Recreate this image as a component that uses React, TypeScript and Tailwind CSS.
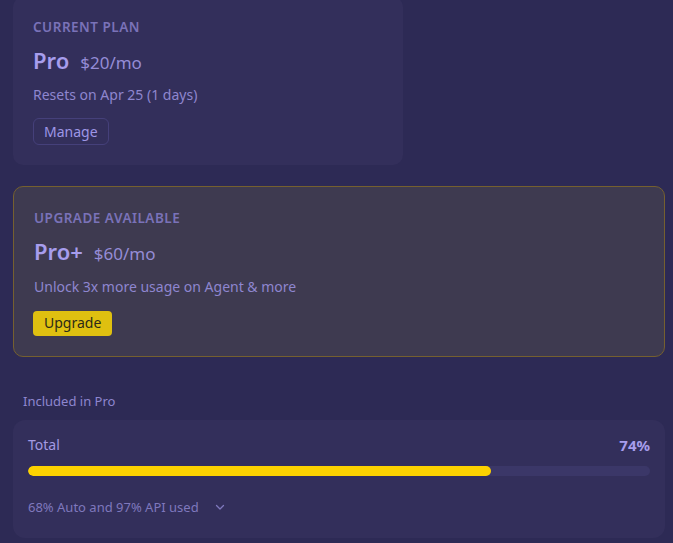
import React from "react";

export default function App() {
  return (
    <div
      className="w-[673px] h-[543px] overflow-hidden bg-[#2d2a55] text-[#9b93dc]"
      style={{ fontFamily: '"Noto Sans", "Open Sans", sans-serif' }}
    >
      <div className="pl-[13px] pr-[8px] mt-[-3px] flex flex-col">
        {/* Current plan */}
        <div className="w-[390px] rounded-[10px] bg-[#332f5b] pl-[20px] pt-[20px] pb-[20px]">
          <div className="text-[13.5px] leading-[20px] font-semibold tracking-[0.5px] text-[#7a72b8]">
            CURRENT PLAN
          </div>
          <div className="mt-[10px] flex items-baseline gap-[11px]">
            <span className="text-[22px] leading-[26px] font-semibold text-[#a79ded]">Pro</span>
            <span className="text-[17px] leading-[26px] text-[#958cd6]">$20/mo</span>
          </div>
          <div className="mt-[9px] text-[14px] leading-[20px] text-[#8e86cf]">
            Resets on Apr 25 (1 days)
          </div>
          <div className="mt-[13px]">
            <button className="h-[27px] px-[10px] rounded-[6px] border border-[#45407a] text-[14px] leading-[20px] text-[#9e96e6]">
              Manage
            </button>
          </div>
        </div>

        {/* Upgrade */}
        <div className="mt-[21px] rounded-[10px] border border-[#75602f] bg-[#3e3a50] pl-[19px] pt-[21px] pb-[20px]">
          <div className="pl-[1px] text-[13.5px] leading-[20px] font-semibold tracking-[0.5px] text-[#7a72b8]">
            UPGRADE AVAILABLE
          </div>
          <div className="pl-[1px] mt-[10px] flex items-baseline gap-[11px]">
            <span className="text-[22px] leading-[26px] font-semibold text-[#a79ded]">Pro+</span>
            <span className="text-[17px] leading-[26px] text-[#958cd6]">$60/mo</span>
          </div>
          <div className="pl-[1px] mt-[10px] text-[14px] leading-[20px] text-[#8e86cf]">
            Unlock 3x more usage on Agent &amp; more
          </div>
          <div className="mt-[13px]">
            <button className="h-[25px] px-[11px] rounded-[4px] bg-[#dfc010] text-[14px] leading-[20px] text-[#2c2a18]">
              Upgrade
            </button>
          </div>
        </div>

        {/* Included */}
        <div className="mt-[34px] pl-[10px] text-[13px] leading-[20px] text-[#8e86cf]">
          Included in Pro
        </div>
        <div className="mt-[9px] rounded-[12px] bg-[#332f5b] px-[15px] pt-[15px] pb-[21px]">
          <div className="flex items-center justify-between">
            <span className="text-[14px] leading-[20px] text-[#a39ae3]">Total</span>
            <span className="text-[15px] leading-[20px] font-bold text-[#a79ded]">74%</span>
          </div>
          <div className="mt-[11px] h-[10px] rounded-full bg-[#3b3768] overflow-hidden">
            <div className="h-full rounded-full bg-[#fcd200]" style={{ width: "74.4%" }} />
          </div>
          <div className="mt-[21px] flex items-center gap-[15px] text-[13px] leading-[20px] text-[#7f78bd]">
            <span>68% Auto and 97% API used</span>
            <svg width="12" height="12" viewBox="0 0 12 12" fill="none" stroke="#7f78bd" strokeWidth="1.3" strokeLinecap="round" strokeLinejoin="round">
              <path d="M2.5 4.5 L6 8 L9.5 4.5" />
            </svg>
          </div>
        </div>
      </div>
    </div>
  );
}
